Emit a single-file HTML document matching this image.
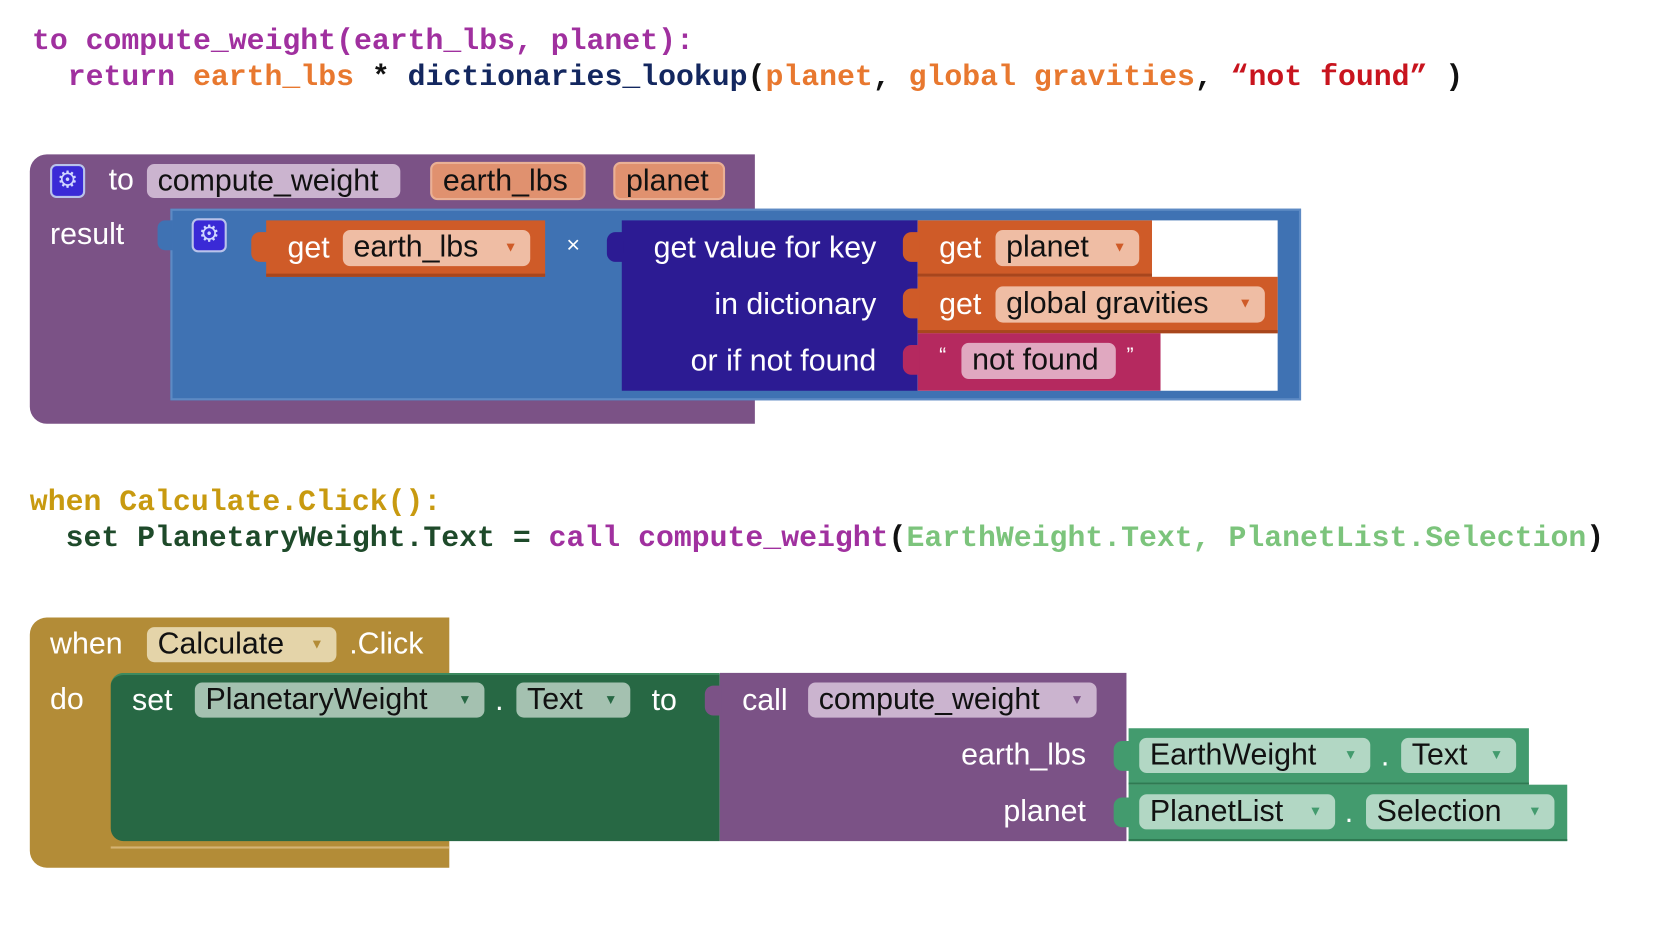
<!DOCTYPE html>
<html><head><meta charset="utf-8"><style>
body{margin:0;background:#fff;width:1661px;height:934px;overflow:hidden}
#w{position:absolute;left:0;top:0;width:1560px;height:877px;transform:scale(1.0647);transform-origin:0 0}
.a{position:absolute;box-sizing:border-box}
.code{position:absolute;font:bold 28px "Liberation Mono",monospace;white-space:pre;line-height:34px}
.t{position:absolute;font:28.5px "Liberation Sans",sans-serif;color:#fff;white-space:pre;line-height:32px}
.p{position:absolute;box-sizing:border-box;border-radius:7px;font:28.5px "Liberation Sans",sans-serif;color:#111;white-space:pre;line-height:32px;padding-left:10px}
.dd{position:absolute;right:12px;top:0;font-size:13px}
.gear{position:absolute;width:33px;height:32px;border-radius:6px;background:#3a2ad6;border:2px solid #b9c3ea;box-sizing:border-box;color:#cfd6ff;font:22px "DejaVu Sans",sans-serif;text-align:center;line-height:28px}
</style></head><body><div id="w">
<div class="code" style="left:30px;top:23px;color:#a0309f">to compute_weight(earth_lbs, planet):</div>
<div class="code" style="left:30px;top:57px;color:#a0309f">  return <span style="color:#e8782f">earth_lbs</span><span style="color:#111"> * </span><span style="color:#13275f">dictionaries_lookup</span><span style="color:#111">(</span><span style="color:#e8782f">planet</span><span style="color:#111">, </span><span style="color:#e8782f">global gravities</span><span style="color:#111">, </span><span style="color:#c8141e">“not found”</span><span style="color:#111"> )</span></div>

<div class="a" style="left:28px;top:145px;width:681px;height:253px;background:#7b5286;border-radius:16px 0 0 16px"></div>
<div class="gear" style="left:47px;top:154px">⚙</div>
<div class="t" style="left:102px;top:153px">to</div>
<div class="p" style="left:138px;top:154px;width:238px;height:32px;background:#cbb4cf">compute_weight</div>
<div class="p" style="left:404px;top:152px;width:146px;height:36px;background:#e0916f;border:2px solid #eab095;line-height:32px">earth_lbs</div>
<div class="p" style="left:576px;top:152px;width:105px;height:36px;background:#e0916f;border:2px solid #eab095">planet</div>
<div class="t" style="left:47px;top:204px">result</div>
<div class="a" style="left:160px;top:196px;width:1062px;height:180px;background:#3f72b3;border:2px solid #5d8ac4"></div>
<div class="a" style="left:148px;top:207px;width:14px;height:28px;background:#3f72b3;border-radius:7px 0 0 7px"></div>
<div class="gear" style="left:180px;top:205px">⚙</div>
<div class="a" style="left:250px;top:207px;width:262px;height:53px;background:#cf5b28;border-bottom:3px solid #a8461d"></div>
<div class="a" style="left:236px;top:218px;width:16px;height:28px;background:#cf5b28;border-radius:8px 0 0 8px"></div>
<div class="t" style="left:270px;top:217px">get</div>
<div class="p" style="left:322px;top:216px;width:176px;height:34px;background:#efbda4">earth_lbs<span class="dd" style="color:#cf5b28">▼</span></div>
<div class="t" style="left:532px;top:214px;font-size:22px">×</div>
<div class="a" style="left:584px;top:207px;width:278px;height:160px;background:#2c1b93"></div>
<div class="a" style="left:570px;top:218px;width:16px;height:28px;background:#2c1b93;border-radius:8px 0 0 8px"></div>
<div class="t" style="left:574px;top:217px;width:249px;text-align:right">get value for key</div>
<div class="t" style="left:574px;top:270px;width:249px;text-align:right">in dictionary</div>
<div class="t" style="left:574px;top:323px;width:249px;text-align:right">or if not found</div>
<div class="a" style="left:862px;top:207px;width:338px;height:160px;background:#fff"></div>
<div class="a" style="left:862px;top:207px;width:220px;height:53px;background:#cf5b28;border-bottom:3px solid #a8461d"></div>
<div class="a" style="left:848px;top:218px;width:16px;height:28px;background:#cf5b28;border-radius:8px 0 0 8px"></div>
<div class="t" style="left:882px;top:217px">get</div>
<div class="p" style="left:935px;top:216px;width:135px;height:34px;background:#efbda4">planet<span class="dd" style="color:#cf5b28">▼</span></div>
<div class="a" style="left:862px;top:260px;width:338px;height:53px;background:#cf5b28;border-bottom:3px solid #a8461d"></div>
<div class="a" style="left:848px;top:271px;width:16px;height:28px;background:#cf5b28;border-radius:8px 0 0 8px"></div>
<div class="t" style="left:882px;top:270px">get</div>
<div class="p" style="left:935px;top:269px;width:253px;height:34px;background:#efbda4">global gravities<span class="dd" style="color:#cf5b28">▼</span></div>
<div class="a" style="left:862px;top:313px;width:228px;height:54px;background:#b5295f"></div>
<div class="a" style="left:848px;top:324px;width:16px;height:28px;background:#b5295f;border-radius:8px 0 0 8px"></div>
<div class="t" style="left:882px;top:318px;font-size:20px">“</div>
<div class="p" style="left:903px;top:322px;width:145px;height:34px;background:#e0a8c0">not found</div>
<div class="t" style="left:1058px;top:318px;font-size:20px">”</div>

<div class="code" style="left:28px;top:456px;color:#c89a10">when Calculate.Click():</div>
<div class="code" style="left:28px;top:490px;color:#1e4a2a">  set PlanetaryWeight.Text = <span style="color:#a0309f">call compute_weight</span><span style="color:#111">(</span><span style="color:#7cc47c">EarthWeight.Text, PlanetList.Selection</span><span style="color:#111">)</span></div>

<div class="a" style="left:28px;top:580px;width:394px;height:235px;background:#b38c37;border-radius:16px 0 0 16px"></div>
<div class="t" style="left:47px;top:589px">when</div>
<div class="p" style="left:138px;top:589px;width:178px;height:33px;background:#e4d4a9">Calculate<span class="dd" style="color:#b38c37">▼</span></div>
<div class="t" style="left:328px;top:589px">.Click</div>
<div class="t" style="left:47px;top:641px">do</div>
<div class="a" style="left:104px;top:795px;width:318px;height:0;border-top:2px solid #d4b474"></div>
<div class="a" style="left:104px;top:632px;width:572px;height:158px;background:#276844;border-radius:12px 0 0 12px;border-top:2px solid #3d8a5f"></div>
<div class="t" style="left:124px;top:642px">set</div>
<div class="p" style="left:183px;top:641px;width:272px;height:33px;background:#a4c1b0">PlanetaryWeight<span class="dd" style="color:#276844">▼</span></div>
<div class="t" style="left:465px;top:642px">.</div>
<div class="p" style="left:485px;top:641px;width:107px;height:33px;background:#a4c1b0">Text<span class="dd" style="color:#276844">▼</span></div>
<div class="t" style="left:612px;top:642px">to</div>
<div class="a" style="left:676px;top:632px;width:382px;height:158px;background:#7b5286"></div>
<div class="a" style="left:662px;top:644px;width:16px;height:28px;background:#7b5286;border-radius:8px 0 0 8px"></div>
<div class="t" style="left:697px;top:642px">call</div>
<div class="p" style="left:759px;top:641px;width:271px;height:33px;background:#cbb4cf">compute_weight<span class="dd" style="color:#7b5286">▼</span></div>
<div class="t" style="left:800px;top:693px;width:220px;text-align:right">earth_lbs</div>
<div class="t" style="left:800px;top:746px;width:220px;text-align:right">planet</div>
<div class="a" style="left:1060px;top:684px;width:376px;height:53px;background:#439b6e;border-bottom:2px solid #2f7a52"></div>
<div class="a" style="left:1046px;top:696px;width:16px;height:28px;background:#439b6e;border-radius:8px 0 0 8px"></div>
<div class="p" style="left:1070px;top:693px;width:217px;height:33px;background:#b2d7c4">EarthWeight<span class="dd" style="color:#439b6e">▼</span></div>
<div class="t" style="left:1297px;top:694px;color:#fff">.</div>
<div class="p" style="left:1316px;top:693px;width:108px;height:33px;background:#b2d7c4">Text<span class="dd" style="color:#439b6e">▼</span></div>
<div class="a" style="left:1060px;top:737px;width:412px;height:53px;background:#439b6e;border-bottom:2px solid #2f7a52"></div>
<div class="a" style="left:1046px;top:749px;width:16px;height:28px;background:#439b6e;border-radius:8px 0 0 8px"></div>
<div class="p" style="left:1070px;top:746px;width:184px;height:33px;background:#b2d7c4">PlanetList<span class="dd" style="color:#439b6e">▼</span></div>
<div class="t" style="left:1263px;top:747px">.</div>
<div class="p" style="left:1283px;top:746px;width:177px;height:33px;background:#b2d7c4">Selection<span class="dd" style="color:#439b6e">▼</span></div>
</div></body></html>
